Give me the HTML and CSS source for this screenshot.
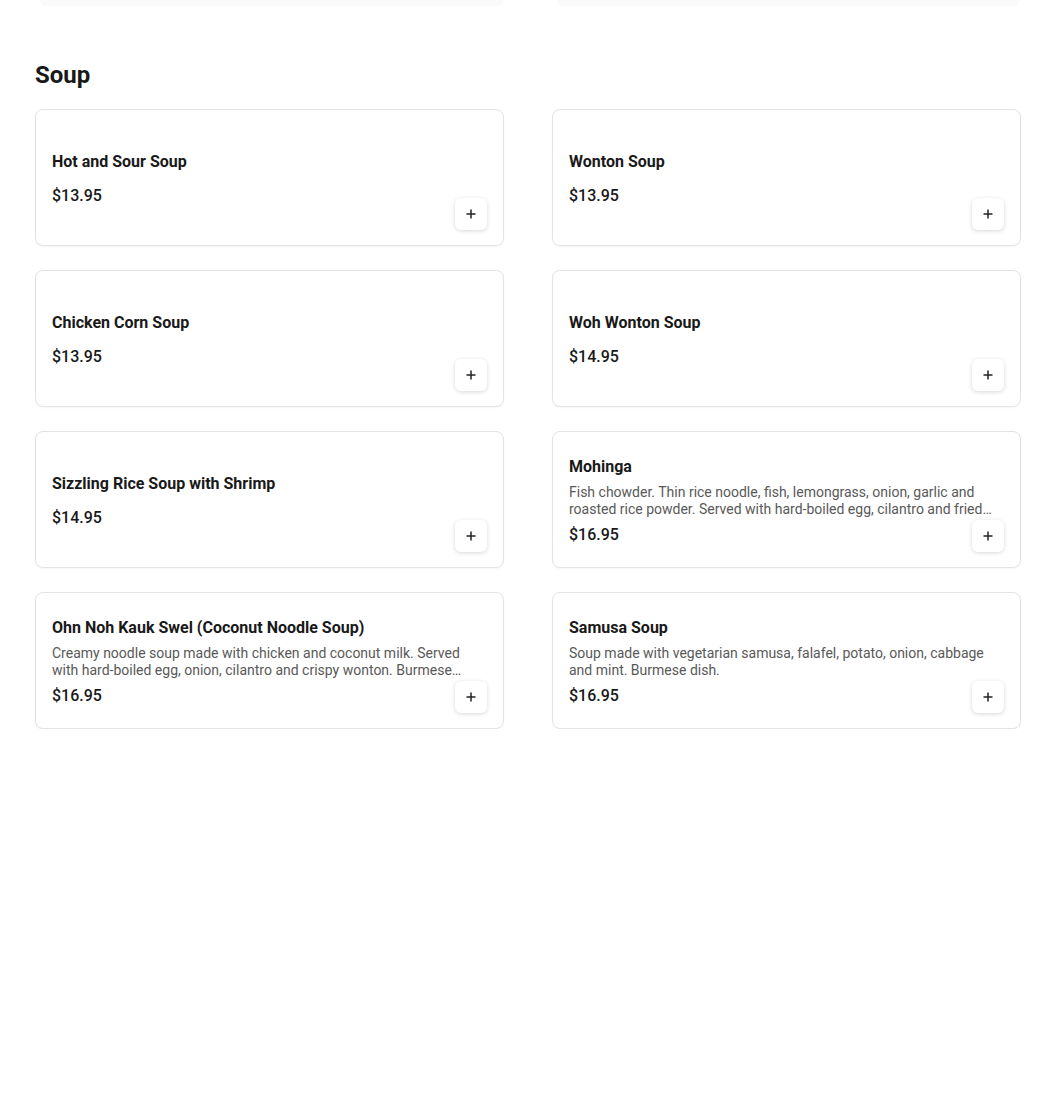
FILE: index.html
```html
<!DOCTYPE html>
<html lang="en">
<head>
<meta charset="utf-8">
<title>Soup</title>
<link rel="stylesheet" href="styles.css">
</head>
<body>
<div class="page">
  <div class="prev-row">
    <div class="prev-card"></div>
    <div class="prev-card"></div>
  </div>
  <section class="section">
    <h2 class="section-title">Soup</h2>
    <div class="grid">
      <div class="card">
        <div class="info">
          <div class="name">Hot and Sour Soup</div>
          <div class="price">$13.95</div>
        </div>
        <button class="add" aria-label="Add"><svg width="12" height="12" viewBox="0 0 12 12"><path d="M6 1.5v9M1.5 6h9" stroke="#222" stroke-width="1.5" fill="none"/></svg></button>
      </div>
      <div class="card">
        <div class="info">
          <div class="name">Wonton Soup</div>
          <div class="price">$13.95</div>
        </div>
        <button class="add" aria-label="Add"><svg width="12" height="12" viewBox="0 0 12 12"><path d="M6 1.5v9M1.5 6h9" stroke="#222" stroke-width="1.5" fill="none"/></svg></button>
      </div>
      <div class="card">
        <div class="info">
          <div class="name">Chicken Corn Soup</div>
          <div class="price">$13.95</div>
        </div>
        <button class="add" aria-label="Add"><svg width="12" height="12" viewBox="0 0 12 12"><path d="M6 1.5v9M1.5 6h9" stroke="#222" stroke-width="1.5" fill="none"/></svg></button>
      </div>
      <div class="card">
        <div class="info">
          <div class="name">Woh Wonton Soup</div>
          <div class="price">$14.95</div>
        </div>
        <button class="add" aria-label="Add"><svg width="12" height="12" viewBox="0 0 12 12"><path d="M6 1.5v9M1.5 6h9" stroke="#222" stroke-width="1.5" fill="none"/></svg></button>
      </div>
      <div class="card">
        <div class="info">
          <div class="name">Sizzling Rice Soup with Shrimp</div>
          <div class="price">$14.95</div>
        </div>
        <button class="add" aria-label="Add"><svg width="12" height="12" viewBox="0 0 12 12"><path d="M6 1.5v9M1.5 6h9" stroke="#222" stroke-width="1.5" fill="none"/></svg></button>
      </div>
      <div class="card">
        <div class="info">
          <div class="name">Mohinga</div>
          <div class="desc">Fish chowder. Thin rice noodle, fish, lemongrass, onion, garlic and roasted rice powder. Served with hard-boiled egg, cilantro and fried garlic. Burmese dish.</div>
          <div class="price">$16.95</div>
        </div>
        <button class="add" aria-label="Add"><svg width="12" height="12" viewBox="0 0 12 12"><path d="M6 1.5v9M1.5 6h9" stroke="#222" stroke-width="1.5" fill="none"/></svg></button>
      </div>
      <div class="card">
        <div class="info">
          <div class="name">Ohn Noh Kauk Swel (Coconut Noodle Soup)</div>
          <div class="desc">Creamy noodle soup made with chicken and coconut milk. Served with hard-boiled egg, onion, cilantro and crispy wonton. Burmese dish.</div>
          <div class="price">$16.95</div>
        </div>
        <button class="add" aria-label="Add"><svg width="12" height="12" viewBox="0 0 12 12"><path d="M6 1.5v9M1.5 6h9" stroke="#222" stroke-width="1.5" fill="none"/></svg></button>
      </div>
      <div class="card">
        <div class="info">
          <div class="name">Samusa Soup</div>
          <div class="desc">Soup made with vegetarian samusa, falafel, potato, onion, cabbage and mint. Burmese dish.</div>
          <div class="price">$16.95</div>
        </div>
        <button class="add" aria-label="Add"><svg width="12" height="12" viewBox="0 0 12 12"><path d="M6 1.5v9M1.5 6h9" stroke="#222" stroke-width="1.5" fill="none"/></svg></button>
      </div>
    </div>
  </section>
</div>
</body>
</html>
```
FILE: styles.css
```css
* { box-sizing: border-box; }
html, body { margin: 0; padding: 0; background: #fff; }
body {
  font-family: Roboto, "Liberation Sans", Arial, sans-serif;
  color: #191919;
}
.page {
  padding: 0 29px 0 35px;
}
.prev-row {
  display: grid;
  grid-template-columns: 469px 469px;
  column-gap: 48px;
  height: 6px;
}
.prev-card {
  background: #fafafa;
  border-radius: 0 0 8px 8px;
  margin: 0 1px 0 5px;
}
.section-title {
  margin: 55px 0 0;
  font-size: 24px;
  line-height: 28px;
  font-weight: 700;
  color: #191919;
}
.grid {
  margin-top: 20px;
  display: grid;
  grid-template-columns: 469px 469px;
  column-gap: 48px;
  row-gap: 24px;
}
.card {
  height: 137px;
  border: 1px solid #e3e3e3;
  border-radius: 8px;
  box-shadow: 0 1px 2px rgba(0,0,0,0.04);
  padding: 16px 16px 15px;
  display: flex;
  align-items: flex-end;
  gap: 12px;
  background: #fff;
}
.info {
  flex: 1;
  min-width: 0;
  align-self: center;
  display: flex;
  flex-direction: column;
  padding-top: 1px;
}
.name {
  font-size: 16px;
  line-height: 24px;
  font-weight: 700;
  margin-bottom: 5px;
}
.desc {
  font-size: 14px;
  line-height: 17px;
  color: #595959;
  display: -webkit-box;
  -webkit-line-clamp: 2;
  -webkit-box-orient: vertical;
  overflow: hidden;
  margin-right: -32px;
}
.price {
  font-size: 16px;
  line-height: 24px;
  font-weight: 500;
  margin-top: 5px;
}
.add {
  flex: none;
  width: 32px;
  height: 32px;
  border: none;
  border-radius: 6px;
  background: #fff;
  box-shadow: 0 1px 4px rgba(0,0,0,0.16);
  display: flex;
  align-items: center;
  justify-content: center;
  padding: 0;
}
```
